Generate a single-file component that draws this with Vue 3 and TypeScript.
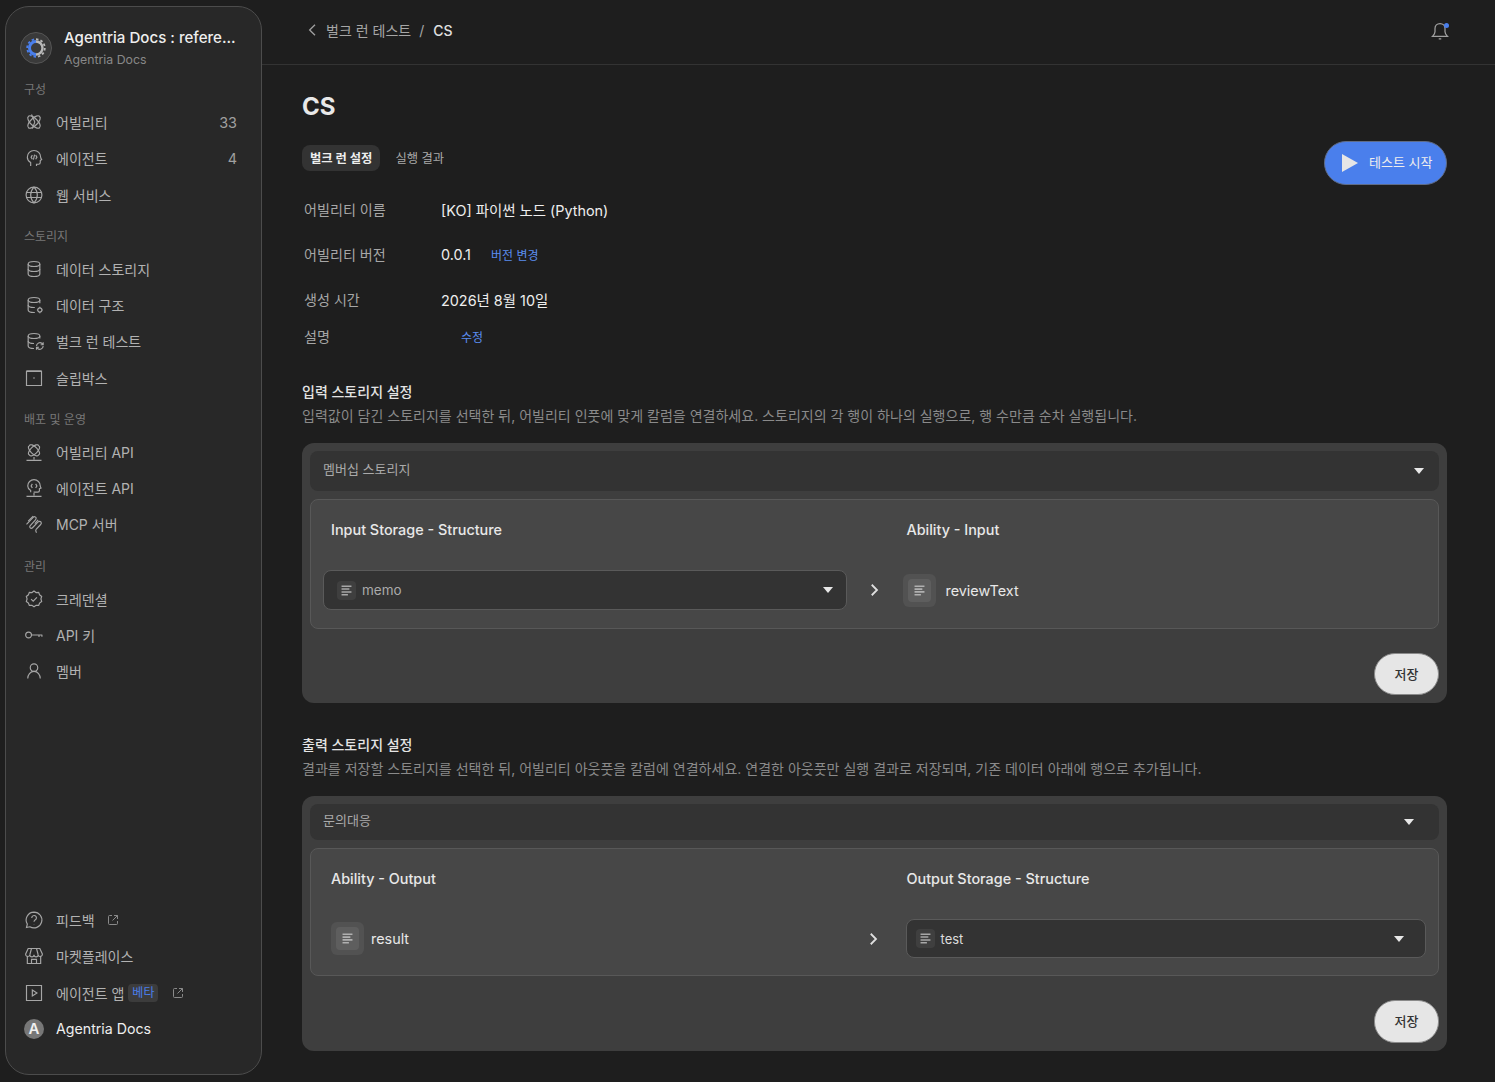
<script setup lang="ts">
interface NavItem {
  label: string
  icon: string
  count?: number
  external?: boolean
  beta?: boolean
}

const icons: Record<string, string[]> = {
  ability: [
    'M5.300 5.300A9.500 4 45 1 1 18.700 18.700A9.500 4 45 1 1 5.300 5.300Z',
    'M5.300 18.700A9.500 4 -45 1 1 18.700 5.300A9.500 4 -45 1 1 5.300 18.700Z',
    'M9 3l4 9M13 12l-3 8',
  ],
  agent: [
    'M8 21.500v-4C5.500 16 4 13.800 4 11a8 8 0 0 1 16 0c0 .9.600 1.900 1.200 2.800L19.500 15v2.500a2 2 0 0 1-2 2H15v2',
    'M10 8.500L8.500 11l1.500 2.500M14 8.500l1.500 2.500-1.500 2.500M12.700 8l-1.400 6',
  ],
  globe: [
    'M12 2.500a9.500 9.500 0 1 0 0 19a9.500 9.500 0 1 0 0-19Z',
    'M12 2.500c-5.300 5.500-5.300 13.500 0 19c5.300-5.500 5.300-13.500 0-19Z',
    'M3.200 9h17.600M3.200 15h17.600',
  ],
  db: [
    'M5 6c0-1.700 3.100-3 7-3s7 1.300 7 3v12c0 1.700-3.100 3-7 3s-7-1.300-7-3Z',
    'M5 6c0 1.700 3.100 3 7 3s7-1.300 7-3M5 12c0 1.700 3.100 3 7 3s7-1.300 7-3',
  ],
  dbGear: [
    'M19 10V6c0-1.700-3.100-3-7-3S5 4.300 5 6v12c0 1.700 3.100 3 7 3h1',
    'M5 6c0 1.700 3.100 3 7 3s7-1.300 7-3M5 12c0 1.700 3.100 3 7 3h1',
    'M19 15.500a2.500 2.500 0 1 0 0 5a2.500 2.500 0 1 0 0-5ZM19 14v1M19 21v1M15.500 18h1M21.500 18h1',
  ],
  dbLoop: [
    'M19 9V6c0-1.700-3.100-3-7-3S5 4.300 5 6v12c0 1.700 3.100 3 7 3',
    'M5 6c0 1.700 3.100 3 7 3s7-1.300 7-3M5 12c0 1.700 3.100 3 7 3',
    'M15 18a4 4 0 0 1 6.800-2.800L23 16.500M23 13.500v3h-3M23 18a4 4 0 0 1-6.800 2.800L15 19.500M15 22.500v-3h3',
  ],
  inbox: ['M3 4h18v17H3ZM3 3.500h18', 'M11 12h2'],
  abilityApi: [
    'M6.500 4.500A8 3.400 45 1 1 17.500 15.500A8 3.400 45 1 1 6.500 4.500Z',
    'M6.500 15.500A8 3.400 -45 1 1 17.500 4.500A8 3.400 -45 1 1 6.500 15.500Z',
    'M12 18v3M3 22h18',
  ],
  agentApi: [
    'M8 17v-2c-2-1.300-3.500-3.300-3.500-5.500a7.500 7.500 0 0 1 15 0c0 .9.500 1.700 1 2.500l-2 .9V15a2 2 0 0 1-2 2h-5',
    'M10 7l-1.500 2.500L10 12M14 7l1.500 2.500L14 12',
    'M12 18v3M3 22h18',
  ],
  mcp: [
    'M3 12.500L11 4c1.200-1.300 3-.8 3.500.5.400 1.200-.2 2-1 2.800L7.500 14c-.8.9-.8 2 0 2.700s1.900.6 2.700-.2L17 9.500c1-1 2.500-1 3.300 0s.6 2.200-.3 3.100L14.500 18.500c-.8.9-.8 1.800 .5 4',
    'M5 8.500L11 2.500M13 11.500l4-4.500',
  ],
  badge: [
    'M12 2.500l2.500 1.800 3.100-.2 1.100 2.900 2.500 1.900-.9 3 .9 3-2.500 1.900-1.100 2.900-3.100-.2-2.500 1.800-2.500-1.800-3.100.2-1.100-2.900-2.500-1.900.9-3-.9-3 2.500-1.900 1.100-2.900 3.100.2Z',
    'M8.500 12.200l2.500 2.300 4.500-4.500',
  ],
  key: [
    'M5.500 8.500a3.500 3.500 0 1 0 0 7a3.500 3.500 0 1 0 0-7Z',
    'M9 12h13M18 12v2.500M21.500 12v2',
  ],
  person: [
    'M12 3.500a4.500 4.500 0 1 0 0 9a4.500 4.500 0 1 0 0-9Z',
    'M4.500 21c0-4.500 3-8.500 7.500-8.500s7.500 4 7.500 8.500',
  ],
  help: [
    'M12 2.500a9.500 9.500 0 1 1-5 17.600L3 21l1-4A9.500 9.500 0 0 1 12 2.500Z',
    'M9.300 9.500a2.800 2.800 0 1 1 4.300 2.300c-1 .7-1.600 1.200-1.600 2.400M12 17v.5',
  ],
  store: [
    'M5 3h14l3 6.500a2.500 2.500 0 0 1-5 1a2.500 2.500 0 0 1-5 0a2.500 2.500 0 0 1-5 0a2.500 2.500 0 0 1-5-1Z',
    'M4 12.500V21h16v-8.500M9 21v-5h6v5M9 3L7 10.500M15 3l2 7.500',
  ],
  play: ['M3 3h18v18H3Z', 'M10 8.500l5.500 3.500-5.500 3.500Z'],
}

const externalPath = 'M10 3H5a2 2 0 0 0-2 2v14a2 2 0 0 0 2 2h14a2 2 0 0 0 2-2v-5M14 3h7v7M21 3L11 13'
const linesPath = 'M5 6h14M5 10h11M5 14h14M5 18h9'

const navGroups: { title: string; items: NavItem[] }[] = [
  {
    title: '구성',
    items: [
      { label: '어빌리티', icon: 'ability', count: 33 },
      { label: '에이전트', icon: 'agent', count: 4 },
      { label: '웹 서비스', icon: 'globe' },
    ],
  },
  {
    title: '스토리지',
    items: [
      { label: '데이터 스토리지', icon: 'db' },
      { label: '데이터 구조', icon: 'dbGear' },
      { label: '벌크 런 테스트', icon: 'dbLoop' },
      { label: '슬립박스', icon: 'inbox' },
    ],
  },
  {
    title: '배포 및 운영',
    items: [
      { label: '어빌리티 API', icon: 'abilityApi' },
      { label: '에이전트 API', icon: 'agentApi' },
      { label: 'MCP 서버', icon: 'mcp' },
    ],
  },
  {
    title: '관리',
    items: [
      { label: '크레덴셜', icon: 'badge' },
      { label: 'API 키', icon: 'key' },
      { label: '멤버', icon: 'person' },
    ],
  },
]

const bottomItems: NavItem[] = [
  { label: '피드백', icon: 'help', external: true },
  { label: '마켓플레이스', icon: 'store' },
  { label: '에이전트 앱', icon: 'play', beta: true, external: true },
]
</script>

<template>
  <div class="app">
    <aside class="sidebar">
      <div class="workspace">
        <div class="logo">
          <svg viewBox="0 0 24 24" width="24" height="24" fill="none">
            <path d="M12 5.500a6.500 6.500 0 0 1 0 13" stroke="#b8b8b8" stroke-width="2.400" />
            <path d="M12 18.500a6.500 6.500 0 0 1 0-13" stroke="#4a7fec" stroke-width="3" />
            <path d="M12 3.200a8.800 8.800 0 0 1 0 17.600" stroke="#b8b8b8" stroke-width="1.800" stroke-dasharray="2.500 2.100" />
            <path d="M12 20.800a8.800 8.800 0 0 1 0-17.600" stroke="#4a7fec" stroke-width="1.800" stroke-dasharray="2.500 2.100" />
          </svg>
        </div>
        <div>
          <div class="workspace-name">Agentria Docs : refere...</div>
          <div class="workspace-sub">Agentria Docs</div>
        </div>
      </div>

      <div v-for="group in navGroups" :key="group.title" class="nav-group">
        <div class="nav-title">{{ group.title }}</div>
        <div v-for="item in group.items" :key="item.label" class="nav-item">
          <svg class="nav-icon" viewBox="0 0 24 24">
            <path v-for="d in icons[item.icon]" :key="d" :d="d" />
          </svg>
          <span>{{ item.label }}</span>
          <span v-if="item.count" class="nav-count">{{ item.count }}</span>
        </div>
      </div>

      <div class="nav-bottom">
        <div v-for="item in bottomItems" :key="item.label" class="nav-item">
          <svg class="nav-icon" viewBox="0 0 24 24">
            <path v-for="d in icons[item.icon]" :key="d" :d="d" />
          </svg>
          <span>{{ item.label }}</span>
          <span v-if="item.beta" class="beta">베타</span>
          <svg v-if="item.external" class="external" viewBox="0 0 24 24">
            <path :d="externalPath" />
          </svg>
        </div>
        <div class="nav-item user">
          <span class="avatar">A</span>
          <span>Agentria Docs</span>
        </div>
      </div>
    </aside>

    <main class="main">
      <header class="topbar">
        <svg class="back" viewBox="0 0 24 24"><path d="M15 4l-8 8 8 8" /></svg>
        <span class="crumb">벌크 런 테스트</span>
        <span class="crumb slash">/</span>
        <span class="crumb-current">CS</span>
        <div class="bell">
          <svg viewBox="0 0 24 24">
            <path d="M12 3c-3.500 0-6 2.500-6 6v4c0 2-1 3.500-3 5.500h18c-2-2-3-3.500-3-5.500V9c0-3.500-2.500-6-6-6ZM10.500 21.500h3" />
          </svg>
          <span class="bell-dot"></span>
        </div>
      </header>

      <div class="content">
        <h1 class="title">CS</h1>

        <div class="tab-row">
          <div class="tabs">
            <span class="tab active">벌크 런 설정</span>
            <span class="tab">실행 결과</span>
          </div>
          <button class="start-btn">
            <svg viewBox="0 0 16 18" width="16" height="18"><path d="M0 0l16 9-16 9z" /></svg>
            <span>테스트 시작</span>
          </button>
        </div>

        <div class="info">
          <div class="info-row">
            <span class="info-label">어빌리티 이름</span>
            <span class="info-value">[KO] 파이썬 노드 (Python)</span>
          </div>
          <div class="info-row">
            <span class="info-label">어빌리티 버전</span>
            <span class="info-value">0.0.1</span>
            <a class="link version-link">버전 변경</a>
          </div>
          <div class="info-row">
            <span class="info-label">생성 시간</span>
            <span class="info-value">2026년 8월 10일</span>
          </div>
          <div class="info-row desc-row">
            <span class="info-label">설명</span>
            <a class="link edit-link">수정</a>
          </div>
        </div>

        <section class="section">
          <h2 class="section-title">입력 스토리지 설정</h2>
          <p class="section-desc">입력값이 담긴 스토리지를 선택한 뒤, 어빌리티 인풋에 맞게 칼럼을 연결하세요. 스토리지의 각 행이 하나의 실행으로, 행 수만큼 순차 실행됩니다.</p>
          <div class="panel">
            <div class="storage-select">
              <span>멤버십 스토리지</span>
              <i class="caret"></i>
            </div>
            <div class="map-card">
              <div class="map-head left">Input Storage - Structure</div>
              <div></div>
              <div class="map-head right">Ability - Input</div>
              <div class="field-select">
                <span class="mini-icon"><svg viewBox="0 0 24 24"><path :d="linesPath" /></svg></span>
                <span>memo</span>
                <i class="caret"></i>
              </div>
              <svg class="arrow" viewBox="0 0 24 24"><path d="M9 5l7 7-7 7" /></svg>
              <div class="field-static">
                <span class="big-icon"><svg viewBox="0 0 24 24"><path :d="linesPath" /></svg></span>
                <span>reviewText</span>
              </div>
            </div>
            <div class="panel-foot"><button class="save-btn">저장</button></div>
          </div>
        </section>

        <section class="section second">
          <h2 class="section-title">출력 스토리지 설정</h2>
          <p class="section-desc">결과를 저장할 스토리지를 선택한 뒤, 어빌리티 아웃풋을 칼럼에 연결하세요. 연결한 아웃풋만 실행 결과로 저장되며, 기존 데이터 아래에 행으로 추가됩니다.</p>
          <div class="panel">
            <div class="storage-select small">
              <span>문의대응</span>
              <i class="caret"></i>
            </div>
            <div class="map-card small">
              <div class="map-head left">Ability - Output</div>
              <div></div>
              <div class="map-head right">Output Storage - Structure</div>
              <div class="field-static output">
                <span class="big-icon"><svg viewBox="0 0 24 24"><path :d="linesPath" /></svg></span>
                <span>result</span>
              </div>
              <svg class="arrow" viewBox="0 0 24 24"><path d="M9 5l7 7-7 7" /></svg>
              <div class="field-select output">
                <span class="mini-icon"><svg viewBox="0 0 24 24"><path :d="linesPath" /></svg></span>
                <span>test</span>
                <i class="caret"></i>
              </div>
            </div>
            <div class="panel-foot"><button class="save-btn">저장</button></div>
          </div>
        </section>
      </div>
    </main>
  </div>
</template>

<style>
html,
body {
  margin: 0;
  background: #1e1e1e;
}
</style>

<style scoped>
.app {
  display: flex;
  height: 1082px;
  overflow: hidden;
  background: #1e1e1e;
  color: #e8e8e8;
  font-family: Inter, "Noto Sans CJK KR", sans-serif;
  font-size: 14px;
}

.sidebar {
  display: flex;
  flex-direction: column;
  flex: none;
  box-sizing: border-box;
  width: 257px;
  margin: 6px 0 7px 5px;
  padding: 21px 18px 27px;
  background: #282828;
  border: 1px solid #4c4c4c;
  border-radius: 24px;
}

.workspace {
  display: flex;
  gap: 12px;
  height: 42px;
  margin-left: -4px;
}

.logo {
  display: flex;
  align-items: center;
  justify-content: center;
  flex: none;
  width: 32px;
  height: 32px;
  margin-top: 4px;
  background: #3a3a3a;
  border: 1px solid #555;
  border-radius: 50%;
  box-sizing: border-box;
}

.workspace-name {
  font-size: 15.1px;
  line-height: 20px;
  font-weight: 500;
  color: #eee;
  white-space: nowrap;
}

.workspace-sub {
  margin-top: 2px;
  font-size: 12.3px;
  line-height: 19px;
  color: #888;
}

.nav-group + .nav-group {
  margin-top: 4px;
}

.nav-title {
  padding: 12px 0 6px;
  font-size: 12px;
  line-height: 16px;
  color: #777;
}

.nav-item {
  display: flex;
  align-items: center;
  height: 36.25px;
  font-size: 14px;
  color: #b2b2b2;
}

.nav-icon {
  flex: none;
  width: 20px;
  height: 20px;
  margin-right: 12px;
  fill: none;
  stroke: #a6a6a6;
  stroke-width: 1.4;
}

.nav-count {
  margin-left: auto;
  margin-right: 6px;
  font-size: 14.4px;
  color: #a0a0a0;
}

.external {
  width: 12px;
  height: 12px;
  margin-left: 12px;
  fill: none;
  stroke: #8a8a8a;
  stroke-width: 2;
}

.beta {
  margin-left: 4px;
  padding: 0 4px;
  font-size: 12px;
  line-height: 18px;
  color: #4a7fec;
  background: #3c3c3c;
  border-radius: 4px;
}

.beta + .external {
  margin-left: 14px;
}

.nav-bottom {
  margin-top: auto;
}

.user {
  font-size: 14.2px;
  color: #eee;
}

.avatar {
  display: flex;
  align-items: center;
  justify-content: center;
  flex: none;
  width: 20px;
  height: 20px;
  margin-right: 12px;
  font-size: 15px;
  font-weight: 600;
  color: #f0f0f0;
  background: #777;
  border-radius: 50%;
}

.main {
  flex: 1;
  min-width: 0;
}

.topbar {
  display: flex;
  align-items: center;
  box-sizing: border-box;
  height: 65px;
  padding: 0 48px 4px 43px;
  border-bottom: 1px solid #333;
}

.back {
  width: 16px;
  height: 16px;
  margin-right: 5px;
  fill: none;
  stroke: #a0a0a0;
  stroke-width: 2;
}

.crumb {
  color: #a6a6a6;
}

.slash {
  margin: 0 9px 0 8px;
}

.crumb-current {
  color: #e0e0e0;
  font-weight: 500;
}

.bell {
  position: relative;
  display: flex;
  margin-top: 2px;
  margin-left: auto;
  margin-right: -3px;
}

.bell svg {
  width: 20px;
  height: 20px;
  fill: none;
  stroke: #a0a0a0;
  stroke-width: 1.5;
}

.bell-dot {
  position: absolute;
  top: 2px;
  right: 1px;
  width: 5px;
  height: 5px;
  background: #4a7fec;
  border-radius: 50%;
}

.content {
  padding: 27px 48px 0 40px;
}

.title {
  margin: 0 0 19px;
  font-size: 24px;
  line-height: 30px;
  font-weight: 700;
  color: #e8e8e8;
}

.tab-row {
  display: flex;
  justify-content: space-between;
  height: 44px;
}

.tabs {
  display: flex;
  align-self: flex-start;
  gap: 7px;
  margin-top: 4px;
}

.tab {
  padding: 1px 8px 0;
  font-size: 12.3px;
  line-height: 25px;
  color: #aaa;
}

.tab.active {
  font-weight: 700;
  color: #eee;
  background: #333;
  border-radius: 8px;
}

.start-btn {
  display: flex;
  align-items: center;
  gap: 11px;
  box-sizing: border-box;
  width: 123px;
  height: 44px;
  padding: 0 0 0 17px;
  font: inherit;
  font-size: 13px;
  color: #eee;
  background: #4a7fec;
  border: 1px solid #5f6c88;
  border-radius: 22px;
}

.start-btn span {
  margin-bottom: 3px;
}

.start-btn svg {
  fill: #e6e6e6;
}

.info {
  margin-top: 13px;
}

.info-row {
  display: flex;
  align-items: center;
  height: 22px;
  margin-bottom: 23px;
  padding-left: 2px;
}

.info-row:nth-child(3) {
  margin-bottom: 15px;
}

.info-row.desc-row {
  margin-bottom: 0;
}

.info-label {
  flex: none;
  width: 137px;
  font-size: 14.1px;
  color: #a6a6a6;
}

.info-value {
  font-size: 14.4px;
  color: #eee;
}

.link {
  font-size: 12px;
  color: #5b8def;
}

.version-link,
.edit-link {
  margin-left: 20px;
}

.section {
  margin-top: 35px;
}

.section.second {
  margin-top: 32px;
}

.section-title {
  margin: 0 0 4px;
  font-size: 14px;
  line-height: 20px;
  font-weight: 500;
  color: #e4e4e4;
}

.section-desc {
  margin: 0 0 17px;
  font-size: 14.02px;
  line-height: 20px;
  color: #8a8a8a;
  white-space: nowrap;
}

.panel {
  padding: 8px;
  background: #3e3e3e;
  border-radius: 12px;
}

.storage-select {
  display: flex;
  align-items: center;
  justify-content: space-between;
  height: 40px;
  padding: 0 15px 0 13px;
  font-size: 13px;
  color: #aaa;
  background: #333;
  border-radius: 8px;
}

.storage-select span {
  margin-bottom: 6px;
}

.storage-select.small {
  height: 36px;
  padding-right: 25px;
}

.caret {
  flex: none;
  width: 0;
  height: 0;
  border-left: 5.5px solid transparent;
  border-right: 5.5px solid transparent;
  border-top: 6px solid #e8e8e8;
}

.map-card {
  display: grid;
  grid-template-columns: 1fr 56px 1fr;
  grid-template-rows: 20px auto;
  align-content: start;
  align-items: center;
  row-gap: 30px;
  box-sizing: border-box;
  height: 130px;
  margin-top: 8px;
  padding: 20px 12px 18px;
  background: #474747;
  border: 1px solid #585858;
  border-radius: 8px;
}

.map-card.small {
  height: 128px;
}

.map-head {
  align-self: start;
  font-size: 14.4px;
  line-height: 20px;
  font-weight: 500;
  color: #e8e8e8;
}

.map-head.left {
  padding-left: 8px;
}

.map-head.right {
  padding-left: 4px;
}

.field-select {
  display: flex;
  align-items: center;
  box-sizing: border-box;
  height: 40px;
  padding: 0 13px;
  font-size: 13.5px;
  color: #aaa;
  background: #333;
  border: 1px solid #5a5a5a;
  border-radius: 8px;
}

.field-select .caret {
  margin-left: auto;
}

.field-select.output {
  height: 39px;
  margin-left: 3px;
  padding: 0 21px 0 9px;
  font-size: 13px;
  color: #ddd;
}

.mini-icon {
  display: flex;
  align-items: center;
  justify-content: center;
  width: 19px;
  height: 19px;
  margin-right: 6px;
  background: #3f3f3f;
  border-radius: 4px;
}

.mini-icon svg {
  width: 17px;
  height: 17px;
  fill: none;
  stroke: #a8a8a8;
  stroke-width: 2.2;
}

.big-icon {
  display: flex;
  align-items: center;
  justify-content: center;
  flex: none;
  width: 33px;
  height: 33px;
  margin-right: 10px;
  background: #525252;
  border-radius: 6px;
}

.output .big-icon {
  margin-right: 7px;
}

.big-icon svg {
  box-sizing: border-box;
  width: 23px;
  height: 23px;
  padding: 3px;
  fill: none;
  stroke: #b0b0b0;
  stroke-width: 2.4;
  background: #5e5e5e;
  border-radius: 4px;
}

.arrow {
  justify-self: center;
  width: 18px;
  height: 18px;
  margin-right: 2px;
  fill: none;
  stroke: #e0e0e0;
  stroke-width: 2.4;
}

.small .arrow {
  margin-right: 4px;
}

.field-static {
  display: flex;
  align-items: center;
  font-size: 14.4px;
  color: #e8e8e8;
}

.field-static.output {
  margin-left: 8px;
}

.panel-foot {
  display: flex;
  justify-content: flex-end;
  margin-top: 24px;
}

.save-btn {
  box-sizing: border-box;
  width: 65px;
  height: 42px;
  padding: 0 0 2px;
  font: inherit;
  font-size: 13px;
  font-weight: 500;
  color: #333;
  background: #e6e6e6;
  border: 1px solid #8a8a8a;
  border-radius: 21px;
}

.second .save-btn {
  height: 43px;
}
</style>
